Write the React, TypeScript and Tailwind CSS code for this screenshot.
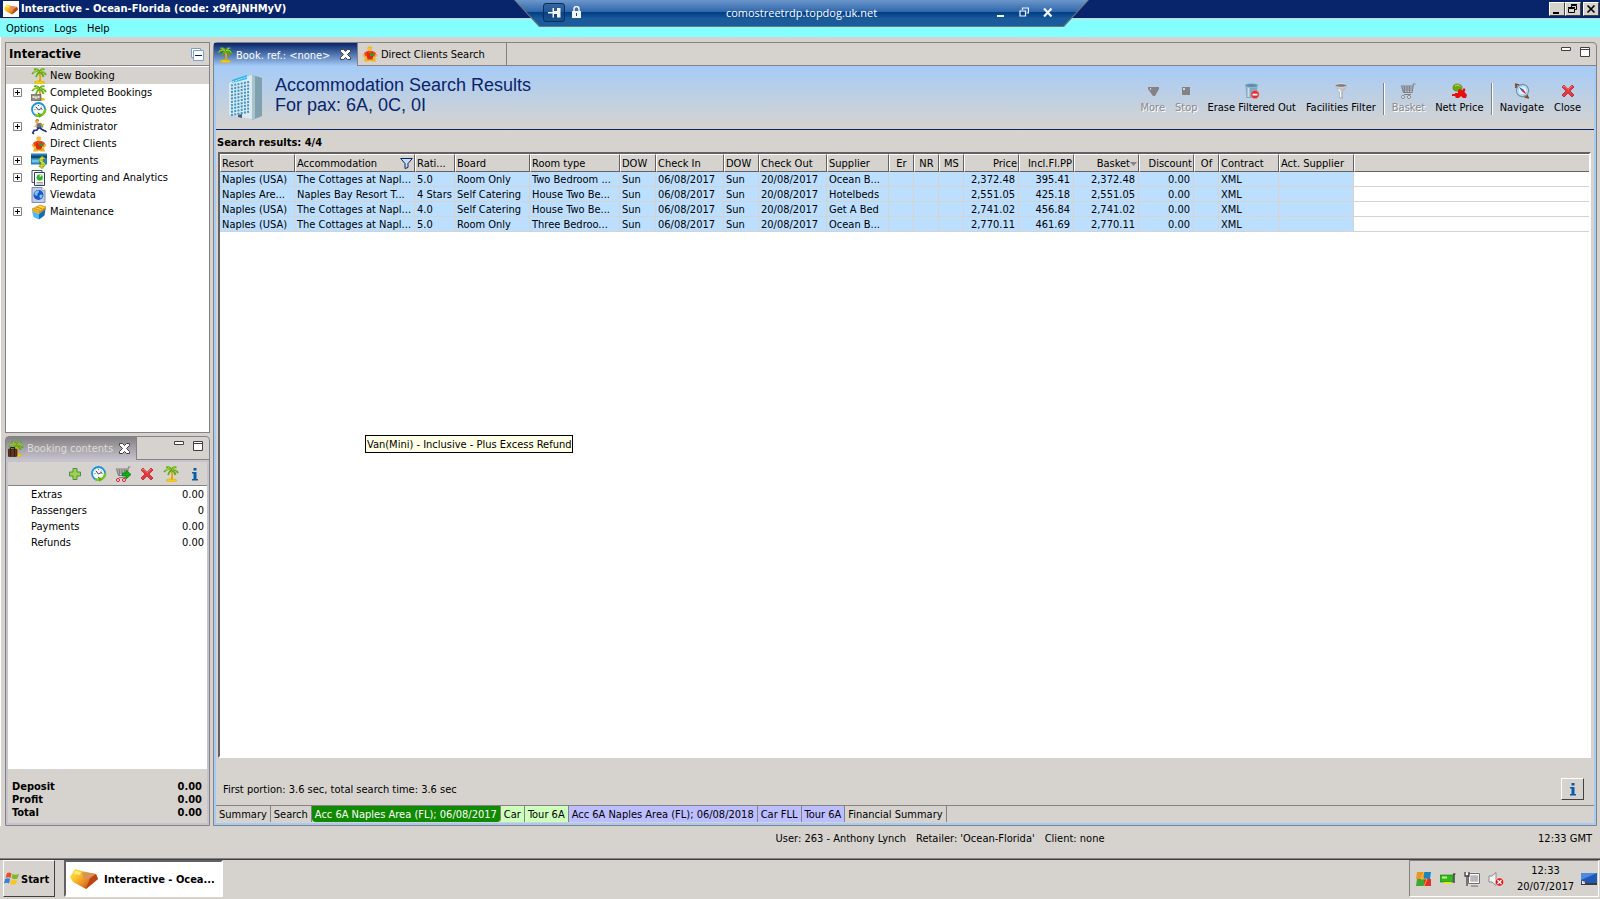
import type { ReactNode } from "react";
import clsx from "clsx";

const raised = "border border-t-white border-l-white border-r-[#424142] border-b-[#424142] bg-[#d6d3ce]";

function Svg({ children, size = "size-4", box = "0 0 16 16" }: { children: ReactNode; size?: string; box?: string }) {
  return (
    <svg viewBox={box} className={clsx("shrink-0", size)} aria-hidden="true">
      {children}
    </svg>
  );
}

function PalmShape() {
  return (
    <>
      <path d="M3 14.500c1-1 3-1.500 5-1.500s5 .5 6 1.500c-1 1-10 1-11 0z" fill="#ffd700" stroke="#e8b800" />
      <path d="M8 4c1 2 1.500 6 .8 9.500" stroke="#e8a010" strokeWidth="1.800" fill="none" />
      <path d="M8.500 4C6 2.500 3.500 3 1 6M8.500 4C7 1 5 .8 3 1.500M8.500 4C10 1 12 .8 13.500 1.500M8.500 4c2.500-1 5 0 6.500 3M8.500 4C6.500 5 5.500 7 5 9M8.500 4c2 1 3.500 3 4 5" stroke="#5caa10" strokeWidth="1.700" fill="none" />
      <path d="M8 3.500C6 2.500 4 3 2 4.500M9 3.500c2-1 4 0 5 1.500M6.500 2L5 1.500M10.500 2l1.500-.5" stroke="#b5e04a" strokeWidth=".8" fill="none" />
    </>
  );
}

function PalmIcon() {
  return (
    <Svg>
      <PalmShape />
    </Svg>
  );
}

function CompletedIcon() {
  return (
    <Svg>
      <PalmShape />
      <path d="M0 9.500h10v6H0z" fill="#8d8a7c" stroke="#55534a" strokeWidth=".6" />
      <path d="M1.500 11h2v2h-2zM6.500 11h2v2h-2z" fill="#e8e4d0" />
      <circle cx="5" cy="12.500" r="1.500" fill="#d6d3ce" />
    </Svg>
  );
}

function SuitcaseIcon() {
  return (
    <Svg>
      <PalmShape />
      <path d="M2.500 8V6.500h4V8" stroke="#2d1a10" fill="none" />
      <rect x="0" y="8" width="9" height="7.500" rx="1" fill="#5c3422" stroke="#2d1a10" strokeWidth=".6" />
      <path d="M2.500 8v7.500M6.500 8v7.500" stroke="#3a2014" />
    </Svg>
  );
}

function ClockIcon() {
  return (
    <Svg>
      <circle cx="7.500" cy="7.500" r="6.500" fill="#f4f6f8" stroke="#1c93e0" strokeWidth="1.800" />
      <path d="M14.300 7a6.800 6.800 0 0 1-10 6" stroke="#7cc61a" strokeWidth="2.400" fill="none" />
      <path d="M7 10.500l4 2-2.500 3.500z" fill="#5cae0c" />
      <path d="M7.500 3v1M7.500 11v1M3.500 7.500h1M10.500 7.500h1M4.700 4.700l.6.6M10.300 4.700l-.6.6" stroke="#555" strokeWidth=".9" />
      <path d="M5 5l2.500 3L11 6" stroke="#333" fill="none" strokeWidth=".9" />
    </Svg>
  );
}

function RunnerIcon() {
  return (
    <Svg>
      <circle cx="6" cy="2.500" r="1.900" fill="#f2b13c" />
      <path d="M5 1.500C5 .5 7 .2 8 1.500" stroke="#8a5a10" fill="none" />
      <path d="M5.500 4.500l3.500-.5 2 4-3 2-2.500-1z" fill="#66708c" />
      <path d="M9 4l2.500 2.500L11 8.500" stroke="#7a9a1c" strokeWidth="1.600" fill="none" />
      <path d="M8.500 8.500l2.500 2 3 1.500M7.500 8.500L6 11l-3 .5-1 2" stroke="#1b2f8c" strokeWidth="1.700" fill="none" />
      <path d="M6 5.500L3.500 8M10.500 6.500L13 5" stroke="#f2b13c" strokeWidth="1.100" />
      <path d="M14 11.500l1.500 1.500M1 13.500l2 1.500" stroke="#222" strokeWidth="1.300" />
    </Svg>
  );
}

function ClientIcon() {
  return (
    <Svg>
      <path d="M5.500 1.500C6 0 9.500 0 10 1.500v2h-4.500z" fill="#e8b800" />
      <circle cx="7.700" cy="3.500" r="2" fill="#ffb84a" />
      <path d="M2 7.500C3 5.500 5 5 8 5s5 .5 6 2.500L12.500 11h-9z" fill="#f04818" />
      <path d="M5 5.500L8 8l3-2.500V14H5z" fill="#e02a10" />
      <path d="M8 7.500h4V10H8z" fill="#2ca02c" />
      <path d="M1 8.500l2 2.500h2M15 8.500L13 11h-1.500" stroke="#ffa82a" strokeWidth="1.600" fill="none" />
      <path d="M3 12h10l1 3.500H9.500l-1.500-1-1.500 1H2z" fill="#f5b020" />
      <path d="M5.500 11.500h5v2h-5z" fill="#c33c10" />
    </Svg>
  );
}

function PaymentIcon() {
  return (
    <Svg>
      <path d="M0 .5h16v11H0z" fill="#2a83bd" />
      <path d="M0 2.500h16v2.500H0z" fill="#0f4a7a" />
      <path d="M1 6.500h7v3H1z" fill="#6fc3ea" />
      <path d="M13.500 5.500C10 4 7.500 6.500 10 8.500l2.500 1.500c2 1.500 0 4-4.500 2.500M11 3.500v12" stroke="#5c9a08" strokeWidth="2.600" fill="none" />
      <path d="M13.500 5.500C10 4 7.500 6.500 10 8.500l2.500 1.500c2 1.500 0 4-4.500 2.500M11 3.500v12" stroke="#e8e040" strokeWidth="1.200" fill="none" />
    </Svg>
  );
}

function ReportIcon() {
  return (
    <Svg>
      <path d="M1 .5h10v12H1z" fill="#fff" stroke="#44546c" />
      <path d="M3.500 2.500h10v13h-10z" fill="#fff" stroke="#2e3f58" />
      <path d="M5.500 4h6.500v7H5.500z" fill="#d8f0d0" />
      <circle cx="8.700" cy="7.500" r="3" fill="#2fb02f" />
      <path d="M8.700 7.500v-3a3 3 0 0 1 2 1z" fill="#e8ffe0" />
      <path d="M5.500 12.500h6.500M5.500 14h6.500" stroke="#777" strokeWidth=".7" />
    </Svg>
  );
}

function ViewdataIcon() {
  return (
    <Svg>
      <path d="M1 .5h10l3 3v12H1z" fill="#c2cce6" stroke="#7f8db4" />
      <path d="M11 .5v3h3" fill="#fff" stroke="#7f8db4" strokeWidth=".7" />
      <circle cx="7.500" cy="8" r="5" fill="#1c55c8" />
      <path d="M4 5c2-2 4-2 4-.5S6 6 6.500 7.500 5 9 4 8 3.500 6 4 5zM9 8c2-1 3 0 2.500 1.500S9.500 12 9 11s-1-2 0-3z" fill="#79c4f0" />
    </Svg>
  );
}

function MaintenanceIcon() {
  return (
    <Svg>
      <path d="M1 5l8-4 6 2-7 5z" fill="#ffd23c" stroke="#b87a00" strokeWidth=".6" />
      <path d="M3 4.500l6 2M5.500 3l6 2" stroke="#b87a00" strokeWidth=".8" />
      <path d="M1 5l7 3v2L1 7z" fill="#f0a818" />
      <path d="M8 8l7-5v2l-7 5z" fill="#d88a08" />
      <path d="M1 7l7 3v5.500L2.500 13z" fill="#4fb8ee" />
      <path d="M8 10l6.500-5-1 6.500L8 15.500z" fill="#0f6fb4" />
    </Svg>
  );
}

function GemIcon({ size, id }: { size: string; id: string }) {
  return (
    <Svg size={size} box="0 0 28 20">
      <defs>
        <linearGradient id={id} x1="0" y1="0" x2="1" y2=".7">
          <stop offset="0" stopColor="#ffec4a" />
          <stop offset=".35" stopColor="#fbc22c" />
          <stop offset=".65" stopColor="#e88a28" />
          <stop offset="1" stopColor="#b0380c" />
        </linearGradient>
      </defs>
      <path d="M5 0l7 2 14 3 2 5-12 10L3 13 0 8z" fill={`url(#${id})`} />
      <path d="M12 3l14 2-5 4-7 1z" fill="#d9935a" />
      <path d="M26 5l2 5-12 10 4-11z" fill="#b83c12" opacity=".8" />
      <path d="M5 2l6 1-1 3-6-1z" fill="#fff48a" opacity=".8" />
    </Svg>
  );
}

function BuildingIcon() {
  const rows = [0, 1, 2, 3, 4, 5, 6, 7, 8, 9];
  return (
    <Svg size="h-[46px] w-[36px]" box="0 0 36 46">
      <path d="M1 9L24 1v44L1 41z" fill="#dce9ee" />
      <path d="M24 1l10 3v38l-10 4z" fill="#7fa0ae" />
      <path d="M24 1l3 1v43l-3 1z" fill="#a9c3cd" />
      <path d="M4 6l15-5v4L4 9z" fill="#26b4ee" />
      <path d="M4 8l15-5" stroke="#d7f3ff" strokeDasharray="2 1" />
      {rows.map((r) => (
        <g key={r} transform={`translate(0 ${r * 3.3})`}>
          <path d="M3 11.500l18-3.500" stroke="#3a94c8" strokeWidth="2" strokeDasharray="2 1.300" />
        </g>
      ))}
      <path d="M10 41l4-1v4l-4-1z" fill="#4d5d64" />
    </Svg>
  );
}

function CrossRed() {
  return (
    <Svg>
      <path d="M2 4l2-2 4 4 4-4 2 2-4 4 4 4-2 2-4-4-4 4-2-2 4-4z" fill="#e23a3e" stroke="#b4181f" strokeWidth=".7" />
      <path d="M3 4l1.500-1L8 6.500 12 3" stroke="#f58a88" strokeWidth=".9" fill="none" />
    </Svg>
  );
}

function TabClose() {
  return (
    <Svg size="size-[11px]" box="0 0 11 11">
      <path d="M.5.5h3l2 2 2-2h3v2l-3 3 3 3v2h-3l-2-2-2 2h-3v-2l3-3-3-3z" fill="#fff" stroke="#424142" />
    </Svg>
  );
}

function PlusGreen() {
  return (
    <Svg>
      <path d="M6 2.500h4V6h3.500v4H10v3.500H6V10H2.500V6H6z" fill="#9ed04a" stroke="#4a9048" />
    </Svg>
  );
}

function CartIcon({ active }: { active?: boolean }) {
  return (
    <Svg>
      <path d="M15.500 1h-2L12 9.500H3.500L1.500 3H13M2.500 5h10M3 7h9.500M4.500 3v6.500M7 3v6.500M9.500 3v6.500" stroke="#848284" fill="none" strokeWidth="1.100" />
      <path d="M4 11.500h7" stroke="#848284" />
      <circle cx="3" cy="14" r="1.500" fill="#fff" stroke={active ? "#d01018" : "#848284"} />
      <circle cx="9" cy="14" r="1.500" fill="#fff" stroke={active ? "#d01018" : "#848284"} />
      {active && <path d="M7.500 7H11V4l5 4.500-5 4.500v-3H7.500z" fill="#0db10d" stroke="#067206" strokeWidth=".7" />}
    </Svg>
  );
}

function InfoIcon() {
  return (
    <Svg>
      <path d="M6.500 2h3v2.500h-3zM5 6h4.500v7H11v1.500H5V13h1.500V7.500H5z" fill="#0b5ba6" />
    </Svg>
  );
}

function MoreIcon() {
  return (
    <Svg>
      <path d="M3 4h11v2l-4 7H8L3 6z" fill="#848284" />
      <path d="M5 5h1v2H5z" fill="#d6d3ce" />
    </Svg>
  );
}

function StopIcon() {
  return (
    <Svg>
      <path d="M4 4h8v8H4z" fill="#848284" />
      <path d="M5 5h2v2H5z" fill="#d6d3ce" />
    </Svg>
  );
}

function EraseIcon() {
  return (
    <Svg>
      <path d="M1.500 2.500h12l-1 12.500h-10z" fill="#7fa9c4" />
      <path d="M3.500 4h2v10h-2z" fill="#c9dfec" />
      <ellipse cx="7.500" cy="2.500" rx="6.500" ry="2" fill="#5b8fae" stroke="#a9cade" strokeWidth=".6" />
      <circle cx="11" cy="11.500" r="4.200" fill="#dc3434" stroke="#f2b0b0" strokeWidth=".5" />
      <path d="M8.500 10.700h5v1.800h-5z" fill="#fff" />
    </Svg>
  );
}

function FilterIcon() {
  return (
    <Svg>
      <path d="M2 2.500l4.500 6v6l3 1V8.500L14 2.500z" fill="#c4c4c4" stroke="#9c9c9c" strokeWidth=".5" />
      <ellipse cx="8" cy="2.500" rx="6" ry="1.800" fill="#7c7c7c" stroke="#e4e4e4" strokeWidth=".8" />
      <path d="M5.500 6l2 3v5" stroke="#fff" fill="none" strokeWidth="1.200" />
    </Svg>
  );
}

function NettIcon() {
  return (
    <Svg>
      <path d="M2 3.500C3 0 9 0 11 3.500V6c-1 3-8 3-9 0z" fill="#6fa80c" stroke="#4a7a06" strokeWidth=".5" />
      <path d="M4 3c2-1.500 4-1 5 .5" stroke="#c4e468" fill="none" />
      <path d="M7 7l2-1 2 1.500L13 5l1.500 1.500-1 2.500 2.500 3-1 3h-3l-2-2-2 2H5l-1-2H1v-2h3V10h3z" fill="#e80c0c" />
    </Svg>
  );
}

function CompassIcon() {
  return (
    <Svg>
      <path d="M1 1l4 1M2 1v4M15 15l-5-1.500M14 15l-1-3" stroke="#7a4a1a" strokeWidth="1.800" />
      <circle cx="8.500" cy="7.500" r="6" fill="#e6f3fb" stroke="#6d93b4" strokeWidth="1.300" />
      <circle cx="8.500" cy="7.500" r="4.300" fill="none" stroke="#9cc6e4" strokeWidth=".8" />
      <path d="M5 4l4.500 2.500L8 8.500z" fill="#1665c8" />
      <path d="M12.500 11.500L8 8.500l1.500-2z" fill="#e02020" />
    </Svg>
  );
}

function MinimizeGlyph() {
  return (
    <Svg size="h-[5px] w-[11px]" box="0 0 11 5">
      <path d="M.5.5h9v3h-9z" fill="#fff" stroke="#424142" />
    </Svg>
  );
}

function MaximizeGlyph() {
  return (
    <Svg size="size-[11px]" box="0 0 11 11">
      <path d="M.5.5h9v9h-9z" fill="#fff" stroke="#424142" />
      <path d="M0 2.500h10" stroke="#424142" />
    </Svg>
  );
}

type TreeItem = { label: string; icon: ReactNode; expandable?: boolean; selected?: boolean };

const tree: TreeItem[] = [
  { label: "New Booking", icon: <PalmIcon />, selected: true },
  { label: "Completed Bookings", icon: <CompletedIcon />, expandable: true },
  { label: "Quick Quotes", icon: <ClockIcon /> },
  { label: "Administrator", icon: <RunnerIcon />, expandable: true },
  { label: "Direct Clients", icon: <ClientIcon /> },
  { label: "Payments", icon: <PaymentIcon />, expandable: true },
  { label: "Reporting and Analytics", icon: <ReportIcon />, expandable: true },
  { label: "Viewdata", icon: <ViewdataIcon /> },
  { label: "Maintenance", icon: <MaintenanceIcon />, expandable: true },
];

const contents = [
  ["Extras", "0.00"],
  ["Passengers", "0"],
  ["Payments", "0.00"],
  ["Refunds", "0.00"],
];

const totals = [
  ["Deposit", "0.00"],
  ["Profit", "0.00"],
  ["Total", "0.00"],
];

type Column = { label: string; width: string; align?: string; mark?: "filter" | "sort" };

const columns: Column[] = [
  { label: "Resort", width: "w-[75px]" },
  { label: "Accommodation", width: "w-[120px]", mark: "filter" },
  { label: "Rati...", width: "w-[40px]" },
  { label: "Board", width: "w-[75px]" },
  { label: "Room type", width: "w-[90px]" },
  { label: "DOW", width: "w-[36px]" },
  { label: "Check In", width: "w-[68px]" },
  { label: "DOW", width: "w-[35px]" },
  { label: "Check Out", width: "w-[68px]" },
  { label: "Supplier", width: "w-[62px]" },
  { label: "Er", width: "w-[25px]", align: "text-center" },
  { label: "NR", width: "w-[25px]", align: "text-center" },
  { label: "MS", width: "w-[25px]", align: "text-center" },
  { label: "Price", width: "w-[55px]", align: "text-right" },
  { label: "Incl.Fl.PP", width: "w-[55px]", align: "text-right" },
  { label: "Basket", width: "w-[65px]", align: "text-right", mark: "sort" },
  { label: "Discount", width: "w-[55px]", align: "text-right" },
  { label: "Of", width: "w-[25px]", align: "text-center" },
  { label: "Contract", width: "w-[60px]" },
  { label: "Act. Supplier", width: "w-[75px]" },
];

const results = [
  ["Naples (USA)", "The Cottages at Napl...", "5.0", "Room Only", "Two Bedroom ...", "Sun", "06/08/2017", "Sun", "20/08/2017", "Ocean B...", "", "", "", "2,372.48", "395.41", "2,372.48", "0.00", "", "XML", ""],
  ["Naples Are...", "Naples Bay Resort T...", "4 Stars", "Self Catering", "House Two Be...", "Sun", "06/08/2017", "Sun", "20/08/2017", "Hotelbeds", "", "", "", "2,551.05", "425.18", "2,551.05", "0.00", "", "XML", ""],
  ["Naples (USA)", "The Cottages at Napl...", "4.0", "Self Catering", "House Two Be...", "Sun", "06/08/2017", "Sun", "20/08/2017", "Get A Bed", "", "", "", "2,741.02", "456.84", "2,741.02", "0.00", "", "XML", ""],
  ["Naples (USA)", "The Cottages at Napl...", "5.0", "Room Only", "Three Bedroo...", "Sun", "06/08/2017", "Sun", "20/08/2017", "Ocean B...", "", "", "", "2,770.11", "461.69", "2,770.11", "0.00", "", "XML", ""],
];

const pages = [
  { label: "Summary", tone: "" },
  { label: "Search", tone: "" },
  { label: "Acc 6A Naples Area (FL); 06/08/2017", tone: "bg-[#108a00] text-white rounded-b-sm" },
  { label: "Car", tone: "bg-[#ceffbd]" },
  { label: "Tour 6A", tone: "bg-[#ceffbd]" },
  { label: "Acc 6A Naples Area (FL); 06/08/2018", tone: "bg-[#bdbeff]" },
  { label: "Car FLL", tone: "bg-[#bdbeff]" },
  { label: "Tour 6A", tone: "bg-[#bdbeff]" },
  { label: "Financial Summary", tone: "" },
];

function ToolButton({ label, icon, disabled }: { label: string; icon: ReactNode; disabled?: boolean }) {
  return (
    <button
      disabled={disabled}
      className={clsx("flex flex-col items-center gap-[2px] px-[5px]", disabled && "text-[#8c8a8c] [text-shadow:1px_1px_0_#fff]")}
    >
      {icon}
      <span>{label}</span>
    </button>
  );
}

function Divider() {
  return <span className="mx-[2px] h-8 w-[2px] border-l border-[#848284] bg-white" />;
}

function TitleBar() {
  return (
    <header className="flex h-[18px] items-center bg-[#08246b] pr-[1px] pl-[3px] text-white">
      <span className="flex size-4 items-center justify-center bg-white">
        <GemIcon size="h-[11px] w-[14px]" id="gem-title" />
      </span>
      <h1 className="ml-[2px] flex-1 font-bold">Interactive - Ocean-Florida (code: x9fAjNHMyV)</h1>
      <div className="flex">
        <button aria-label="Minimize" className={clsx("h-[14px] w-4", raised)}>
          <Svg size="h-3 w-[14px]" box="0 0 14 12">
            <path d="M3 9h6v2H3z" />
          </Svg>
        </button>
        <button aria-label="Restore" className={clsx("mr-[2px] h-[14px] w-4", raised)}>
          <Svg size="h-3 w-[14px]" box="0 0 14 12">
            <path d="M5.500 4V2.500h5v4H9M2.500 5.500h6v4h-6z" stroke="#000" fill="none" />
            <path d="M5 1h6v1H5zM2 4h7v1H2z" />
          </Svg>
        </button>
        <button aria-label="Close" className={clsx("h-[14px] w-4", raised)}>
          <Svg size="h-3 w-[14px]" box="0 0 14 12">
            <path d="M3.500 2.500l7 7M10.500 2.500l-7 7" stroke="#000" strokeWidth="1.700" />
          </Svg>
        </button>
      </div>
    </header>
  );
}

function RemoteBar() {
  return (
    <div className="absolute top-0 left-[514px] h-[27px] w-[575px] bg-[#737573] font-['Open_Sans',sans-serif] text-white [clip-path:polygon(0_0,100%_0,550px_100%,25px_100%)]">
      <div className="flex h-[26px] items-center bg-linear-to-b from-[#6b96cb] from-0% via-[#2f67ab] via-45% to-[#2f67ab] to-45% [clip-path:polygon(1px_0,574px_0,549px_100%,26px_100%)]">
        <div className="flex h-full w-full items-center bg-linear-to-b from-transparent from-46% via-[#003c84] via-46% to-[#1b5a9b] to-72% pr-[36px] pb-[2px] pl-[29px]">
          <button aria-label="Pin" className="flex h-[19px] w-[22px] items-center justify-center rounded-[3px] border border-[#0a2d5e] bg-[#134680]/50">
            <Svg size="h-[11px] w-[13px]" box="0 0 13 11">
              <path d="M0 5h4.500v1.500H0zM4.500 1H6v3h3V1h3.500v9.500H9V7H6v3.500H4.500z" fill="#f2f4f8" />
            </Svg>
          </button>
          <Svg size="ml-[6px] h-3 w-[11px]" box="0 0 11 12">
            <path d="M3 5V3a2.500 2.500 0 0 1 5 0v2" stroke="#f2f4f8" strokeWidth="1.500" fill="none" />
            <path d="M1 5h9v7H1z" fill="#f2f4f8" />
            <path d="M5 7h1v3H5z" fill="#14427c" />
          </Svg>
          <span className="flex-1 pt-[2px] pl-[108px] text-center">comostreetrdp.topdog.uk.net</span>
          <div className="ml-[84px] flex items-center gap-[14px]">
            <button aria-label="Minimize session">
              <Svg size="h-[10px] w-[8px]" box="0 0 8 10">
                <path d="M0 8h7v2H0z" fill="#f2f4f8" />
              </Svg>
            </button>
            <button aria-label="Restore session">
              <Svg size="size-[10px]" box="0 0 10 10">
                <path d="M3.500 3V1h6v5h-2M1 4h5.500v5H1z" stroke="#f2f4f8" strokeWidth="1.200" fill="none" />
              </Svg>
            </button>
            <button aria-label="Close session">
              <Svg size="h-[9px] w-[10px]" box="0 0 10 9">
                <path d="M1 .5l7.500 8M8.500.5L1 8.500" stroke="#f2f4f8" strokeWidth="2.200" />
              </Svg>
            </button>
          </div>
        </div>
      </div>
    </div>
  );
}

function Navigator() {
  return (
    <section className="flex h-[391px] flex-col border border-[#848284] bg-white">
      <div className="flex h-[23px] items-center justify-between border-b border-[#848284] bg-[#d6d3ce] pr-[5px] pl-[3px]">
        <h2 className="text-[13px] font-bold">Interactive</h2>
        <button aria-label="Collapse all">
          <Svg size="size-[13px]" box="0 0 13 13">
            <path d="M.5.5h9v9h-9z" fill="#fff" stroke="#7ba0c8" />
            <path d="M2.500 2.500h10v10h-10z" fill="#fff" stroke="#7ba0c8" />
            <path d="M4 7h7v1H4z" fill="#08246b" />
          </Svg>
        </button>
      </div>
      <ul className="pt-[1px]">
        {tree.map((item) => (
          <li key={item.label} className={clsx("flex h-[17px] items-center pl-[7px]", item.selected && "bg-[#d6d3ce]")}>
            <span className="w-[18px]">
              {item.expandable && (
                <button aria-label={`Expand ${item.label}`} className="block">
                  <Svg size="size-[9px]" box="0 0 9 9">
                    <path d="M.5.5h8v8h-8z" fill="#fff" stroke="#848284" />
                    <path d="M2 4h5v1H2zM4 2h1v5H4z" />
                  </Svg>
                </button>
              )}
            </span>
            <button className="flex items-center gap-[3px]">
              {item.icon}
              <span className="pt-px">{item.label}</span>
            </button>
          </li>
        ))}
      </ul>
    </section>
  );
}

function BookingContents() {
  return (
    <section className="flex flex-1 flex-col rounded-t-sm border border-[#848284]">
      <div className="flex h-[23px]">
        <div className="flex w-[131px] items-center border-r border-[#848284] bg-linear-to-b from-[#848284] to-[#c6c3ce] pl-[2px] text-[#dedbd6]">
          <SuitcaseIcon />
          <span className="ml-[3px] flex-1 pt-px">Booking contents</span>
          <button aria-label="Close booking contents" className="mr-[6px]">
            <TabClose />
          </button>
        </div>
        <div className="flex flex-1 items-start justify-end gap-2 border-b border-[#848284] pt-1 pr-[5px]">
          <button aria-label="Minimize view">
            <MinimizeGlyph />
          </button>
          <button aria-label="Maximize view">
            <MaximizeGlyph />
          </button>
        </div>
      </div>
      <div className="flex flex-1 flex-col border-2 border-[#c6c3ce]">
        <div className="flex h-6 items-center justify-end gap-2 border-b border-[#848284] pr-1">
          <button aria-label="Add"><PlusGreen /></button>
          <button aria-label="Quick quote"><ClockIcon /></button>
          <button aria-label="Move to basket"><CartIcon active /></button>
          <button aria-label="Delete"><CrossRed /></button>
          <button aria-label="New booking"><PalmIcon /></button>
          <button aria-label="Information"><InfoIcon /></button>
        </div>
        <dl className="flex-1 bg-white pt-px pr-[3px] pl-[23px]">
          {contents.map(([name, value]) => (
            <div key={name} className="flex h-4 items-center justify-between">
              <dt>{name}</dt>
              <dd>{value}</dd>
            </div>
          ))}
        </dl>
        <dl className="h-[54px] pt-[11px] pr-[5px] pl-1 leading-[13px] font-bold">
          {totals.map(([name, value]) => (
            <div key={name} className="flex justify-between">
              <dt>{name}</dt>
              <dd>{value}</dd>
            </div>
          ))}
        </dl>
      </div>
    </section>
  );
}

function ResultsTable() {
  return (
    <div className="mr-[3px] ml-[2px] flex-1 overflow-hidden border-2 border-t-[#636163] border-r-white border-b-white border-l-[#636163] bg-white">
      <table className="w-full table-fixed border-separate border-spacing-0 leading-[13px]">
        <colgroup>
          {columns.map((c, i) => (
            <col key={i} className={c.width} />
          ))}
          <col />
        </colgroup>
        <thead>
          <tr className="h-[18px] bg-[#d6d3ce]">
            {columns.map((c, i) => (
              <th
                key={i}
                className={clsx(
                  "border-t border-r border-b border-l border-t-white border-r-[#636163] border-b-[#636163] border-l-white px-[1px] pt-px pb-0 font-normal whitespace-nowrap",
                  c.align ?? "text-left",
                )}
              >
                <span className={clsx("flex items-center", c.align === "text-right" && "justify-end", c.align === "text-center" && "justify-center", c.mark === "filter" && "justify-between")}>
                  {c.label}
                  {c.mark === "filter" && (
                    <Svg size="h-[11px] w-[13px]" box="0 0 13 11">
                      <path d="M.7.5h11.600L8 5.500v4l-3 1v-5z" fill="#c9dcf2" stroke="#08246b" />
                    </Svg>
                  )}
                  {c.mark === "sort" && (
                    <Svg size="h-1 w-[7px]" box="0 0 7 4">
                      <path d="M0 0h7L3.500 4z" fill="#848284" />
                    </Svg>
                  )}
                </span>
              </th>
            ))}
            <th aria-label="Unused" className="border-t border-b border-l border-t-white border-b-[#636163] border-l-white p-0" />
          </tr>
        </thead>
        <tbody>
          {results.map((row, r) => (
            <tr key={r} className="h-[15px]">
              {row.map((cell, i) => (
                <td
                  key={i}
                  className={clsx(
                    "border-r border-b border-[#d6d3ce] bg-[#bddfff] pt-px pr-[3px] pb-0 pl-[2px] whitespace-nowrap",
                    columns[i].align,
                  )}
                >
                  {cell}
                </td>
              ))}
              <td className="border-b border-[#d6d3ce] p-0" />
            </tr>
          ))}
        </tbody>
      </table>
    </div>
  );
}

function Editor() {
  return (
    <main className="flex min-w-0 flex-1 flex-col rounded-t-sm border border-[#848284]">
      <div className="flex h-[23px] shrink-0">
        <button className="flex w-[144px] items-center border-r border-[#848284] bg-linear-to-b from-[#08246b] to-[#a5cbf7] pl-[3px] text-white">
          <PalmIcon />
          <span className="ml-[3px] flex-1 pt-[2px] text-left">Book. ref.: &lt;none&gt;</span>
          <span className="mr-[6px]">
            <TabClose />
          </span>
        </button>
        <button className="flex w-[149px] items-center gap-[3px] border-r border-b border-[#848284] pl-1">
          <ClientIcon />
          <span className="pt-[2px]">Direct Clients Search</span>
        </button>
        <div className="flex flex-1 items-start justify-end gap-2 border-b border-[#848284] pt-1 pr-[5px]">
          <button aria-label="Minimize editor">
            <MinimizeGlyph />
          </button>
          <button aria-label="Maximize editor">
            <MaximizeGlyph />
          </button>
        </div>
      </div>
      <div className="flex flex-1 flex-col border-r-2 border-b-2 border-l-2 border-[#a5cbf7]">
        <div className="flex h-16 items-start border-b border-[#08246b] bg-linear-to-b from-[#a5cbf7] to-[#d6d3ce] pr-2 pl-3">
          <div className="pt-2">
            <BuildingIcon />
          </div>
          <h2 className="flex-1 pt-[9px] pl-[11px] font-['Liberation_Sans',sans-serif] text-[18px] leading-[20px] text-[#08246b]">
            Accommodation Search Results
            <br />
            For pax: 6A, 0C, 0I
          </h2>
          <div className="flex pt-[17px]">
            <ToolButton label="More" icon={<MoreIcon />} disabled />
            <ToolButton label="Stop" icon={<StopIcon />} disabled />
            <ToolButton label="Erase Filtered Out" icon={<EraseIcon />} />
            <ToolButton label="Facilities Filter" icon={<FilterIcon />} />
            <Divider />
            <ToolButton label="Basket" icon={<CartIcon />} disabled />
            <ToolButton label="Nett Price" icon={<NettIcon />} />
            <Divider />
            <ToolButton label="Navigate" icon={<CompassIcon />} />
            <ToolButton label="Close" icon={<CrossRed />} />
          </div>
        </div>
        <p className="flex h-[22px] items-center pt-[3px] pl-[1px] font-bold">Search results: 4/4</p>
        <ResultsTable />
        <div className="flex h-[47px] items-end justify-between pr-[10px] pb-[5px] pl-[7px]">
          <span className="pb-[3px]">First portion: 3.6 sec, total search time: 3.6 sec</span>
          <button aria-label="Search information" className={clsx("flex h-[22px] w-[23px] items-center justify-center", raised)}>
            <InfoIcon />
          </button>
        </div>
        <nav className="flex h-[18px] border-t border-[#848284]">
          {pages.map((p, i) => (
            <button key={i} className={clsx("mb-[1px] border-r border-[#848284] px-[3px] pt-px whitespace-nowrap", p.tone)}>
              {p.label}
            </button>
          ))}
        </nav>
      </div>
    </main>
  );
}

function Taskbar() {
  return (
    <footer className="flex h-10 items-start border-t border-[#424142] pl-[3px]">
      <button className={clsx("flex h-[37px] w-[52px] items-center gap-[1px] font-bold", raised)}>
        <Svg>
          <path d="M3 2c2-1 3-.5 4.500.5L6.500 7C5 6 3.500 6 1.500 7z" fill="#e8502a" />
          <path d="M8.500 3c2 1 4 1 6.500 0l-1.500 4.500c-2 1-4 1-6-.2z" fill="#7cba2c" />
          <path d="M1.200 8c2-1 3.500-1 5 0L5 12.500C3.500 11.500 2 11.500 0 12.500z" fill="#3a80d8" />
          <path d="M7.200 8.500c2 1 4 1 6 .2L12 13c-2 1-4 1-6-.2z" fill="#fbc422" />
        </Svg>
        <span className="pt-[2px]">Start</span>
      </button>
      <button className="ml-[9px] flex h-[37px] w-[159px] items-center gap-[6px] border-2 border-t-[#636163] border-r-white border-b-white border-l-[#636163] bg-white pl-[4px] font-bold">
        <GemIcon size="h-5 w-7" id="gem-task" />
        <span className="pt-[2px]">Interactive - Ocea...</span>
      </button>
      <div className="mr-[1px] ml-auto flex h-[37px] w-[190px] items-center border border-t-[#848284] border-r-white border-b-white border-l-[#848284] pr-px pl-[6px]">
        <Svg>
          <path d="M1 1h7v7H0z" fill="#e8952a" />
          <path d="M8 1h7l-1 7H8z" fill="#1c86b8" />
          <path d="M1 8h7v7H0z" fill="#3fa535" />
          <path d="M8 8h7v7H8z" fill="#dc3522" />
          <path d="M8 1L5 8h6l-3 7" stroke="#f6d24a" strokeWidth=".7" fill="none" />
        </Svg>
        <span className="ml-2">
          <Svg>
            <path d="M0 4h13v7H0z" fill="#35b81c" stroke="#1a7a10" strokeWidth=".6" />
            <path d="M2 5.500h5v2H2z" fill="#c6f08a" />
            <path d="M4 11h7v2H4z" fill="#e8e820" />
            <path d="M13 3h2.500M14 3v9" stroke="#222" strokeWidth="1.200" />
          </Svg>
        </span>
        <span className="ml-2">
          <Svg>
            <path d="M5 3h10.500v9H5z" fill="#b8b8b8" stroke="#fff" strokeWidth="2.500" />
            <path d="M4.500 2.500h11v10h-11zM7 15h7" stroke="#6c6c6c" fill="none" />
            <path d="M1 1v4h4V1M3 5v10" stroke="#444" fill="none" strokeWidth="1.300" />
            <path d="M2 2h2v2H2z" fill="#fff" />
          </Svg>
        </span>
        <span className="ml-2">
          <Svg>
            <path d="M1 5h3l4-3.500v13L4 11H1z" fill="#f4f4f4" stroke="#8a8a8a" />
            <circle cx="11.500" cy="11" r="4.300" fill="#dc2020" stroke="#fff" strokeWidth=".6" />
            <path d="M9.500 9l4 4M13.500 9l-4 4" stroke="#fff" strokeWidth="1.300" />
          </Svg>
        </span>
        <time className="flex-1 pt-px pl-[6px] text-center leading-4">
          12:33
          <br />
          20/07/2017
        </time>
        <Svg>
          <path d="M0 2h16v10H0z" fill="#1e58b8" />
          <path d="M0 2h16L0 9z" fill="#4d8ae0" />
          <path d="M0 12h16v2H0z" fill="#3a3a3a" />
          <path d="M1 10h3v3H1z" fill="#e8e8e8" />
          <path d="M2.500 10h1.500v1.500H2.500z" fill="#e8502a" />
        </Svg>
      </div>
    </footer>
  );
}

export default function App() {
  return (
    <div className="relative flex h-screen flex-col overflow-hidden bg-[#d6d3ce] font-['DejaVu_Sans_Condensed','DejaVu_Sans',sans-serif] text-[11px] leading-[14px] text-black">
      <TitleBar />
      <nav className="flex h-[19px] items-center gap-[10px] border-t border-[#d6d3ce] bg-[#84ffff] pt-px pl-[6px]">
        <button>Options</button>
        <button>Logs</button>
        <button>Help</button>
      </nav>
      <div className="flex flex-1 gap-[3px] border-l border-white pt-[5px] pr-[3px] pl-1">
        <aside className="flex w-[205px] shrink-0 flex-col gap-[3px]">
          <Navigator />
          <BookingContents />
        </aside>
        <Editor />
      </div>
      <div className="flex h-[33px] items-start border-b border-[#848284] pt-[6px] pr-2">
        <div className="flex flex-1 justify-center gap-[10px] pl-[342px]">
          <span>User: 263 - Anthony Lynch</span>
          <span>Retailer: 'Ocean-Florida'</span>
          <span>Client: none</span>
        </div>
        <span>12:33 GMT</span>
      </div>
      <Taskbar />
      <RemoteBar />
      <div role="tooltip" className="absolute top-[435px] left-[365px] border border-black bg-[#ffffe7] px-px pt-[2px]">
        Van(Mini) - Inclusive - Plus Excess Refund
      </div>
    </div>
  );
}
